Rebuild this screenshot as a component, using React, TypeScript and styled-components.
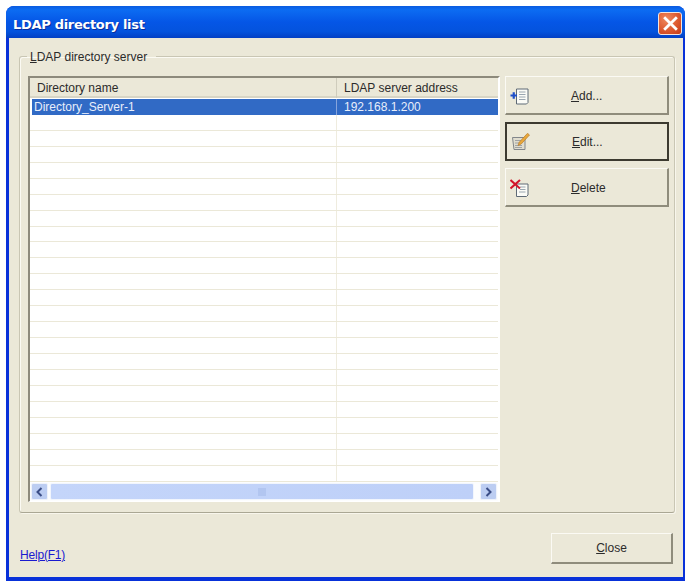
import styled, { createGlobalStyle } from "styled-components";

const rows = Array.from({ length: 24 }, (_, i) =>
  i === 0 ? { name: "Directory_Server-1", address: "192.168.1.200" } : { name: "", address: "" }
);

const GlobalStyle = createGlobalStyle`
  html, body {
    margin: 0;
    padding: 0;
    background: #fff;
  }
  body {
    font-family: "Liberation Sans", Arial, sans-serif;
    font-size: 12px;
    color: #2b2b2b;
  }
`;

const App = () => {
  return (
    <Page>
      <GlobalStyle />
      <Window>
        <TitleBar>
          <Title>LDAP directory list</Title>
          <CloseBox>
            <svg width="15" height="15" viewBox="0 0 14 14">
              <path d="M2 2 L12 12 M12 2 L2 12" stroke="#fff" strokeWidth="2.6" strokeLinecap="square" />
            </svg>
          </CloseBox>
        </TitleBar>
        <Body>
          <Group>
            <Legend>
              <u>L</u>DAP directory server
            </Legend>
            <GroupInner>
              <ListView>
                <Header>
                  <HeaderCell>Directory name</HeaderCell>
                  <HeaderCell>LDAP server address</HeaderCell>
                </Header>
                <Rows>
                  {rows.map((row, i) => (
                    <Row key={i} $selected={i === 0}>
                      <Cell>{row.name}</Cell>
                      <Cell>{row.address}</Cell>
                    </Row>
                  ))}
                </Rows>
                <ScrollBar>
                  <ArrowButton>
                    <svg width="9" height="10" viewBox="0 0 9 10">
                      <path d="M6.5 1 L2.5 5 L6.5 9" fill="none" stroke="#3a4d86" strokeWidth="2" />
                    </svg>
                  </ArrowButton>
                  <Thumb>
                    <svg width="9" height="8" viewBox="0 0 9 8">
                      <path d="M1 0V8M3 0V8M5 0V8M7 0V8" stroke="#a3b9e8" strokeWidth="1" />
                    </svg>
                  </Thumb>
                  <ArrowButton $end>
                    <svg width="9" height="10" viewBox="0 0 9 10">
                      <path d="M2.5 1 L6.5 5 L2.5 9" fill="none" stroke="#3a4d86" strokeWidth="2" />
                    </svg>
                  </ArrowButton>
                </ScrollBar>
              </ListView>
              <Actions>
                <ActionButton>
                  <IconSlot>
                    <svg width="20" height="18" viewBox="0 0 20 18">
                      <path d="M6.500 2h11.500v13.500l-1.500 1.500h-10z" fill="#fbfbf6" stroke="#5f6a76" />
                      <path d="M9 5h6.500M9 7.500h6.500M9 10h6.500M9 12.500h6.500" stroke="#9aa6b0" />
                      <path d="M0.500 8.500h6.500M3.750 5.250v6.500" stroke="#1f4fc8" strokeWidth="2.200" />
                    </svg>
                  </IconSlot>
                  <ButtonLabel>
                    <u>A</u>dd...
                  </ButtonLabel>
                </ActionButton>
                <ActionButton $focused>
                  <IconSlot>
                    <svg width="20" height="18" viewBox="0 0 20 18">
                      <path d="M1.500 4.500h12.500v12h-11z" fill="#e0ddcf" stroke="#82868a" />
                      <path d="M4 7.500h6M4 10h5M4 12.500h7M4 14.500h7" stroke="#a0a3a4" />
                      <path d="M7 12.500l1.200-3.200 8.300-9 2 1.700-8.300 9z" fill="#e8a83a" stroke="#b87b2c" strokeWidth="0.700" />
                    </svg>
                  </IconSlot>
                  <ButtonLabel>
                    <u>E</u>dit...
                  </ButtonLabel>
                </ActionButton>
                <ActionButton>
                  <IconSlot>
                    <svg width="20" height="18" viewBox="0 0 20 18">
                      <path d="M6.500 5h11.500v11l-1.500 1.500h-10z" fill="#fbfbf6" stroke="#5f6a76" />
                      <path d="M10 8h5.500M10 10.500h5.500M9 13h6.500" stroke="#9aa6b0" />
                      <path d="M0.500 1l9.500 8.500M10 1l-9.500 8.500" stroke="#d3152a" strokeWidth="2" />
                    </svg>
                  </IconSlot>
                  <ButtonLabel>
                    <u>D</u>elete
                  </ButtonLabel>
                </ActionButton>
              </Actions>
            </GroupInner>
          </Group>
          <Footer>
            <HelpLink href="#">Help(F1)</HelpLink>
            <CloseButton>
              <u>C</u>lose
            </CloseButton>
          </Footer>
        </Body>
      </Window>
    </Page>
  );
};
export default App;

const Page = styled.div`
  width: 689px;
  height: 582px;
  box-sizing: border-box;
  padding: 6px 4px 1px 6px;
  overflow: hidden;
`;

const Window = styled.div`
  height: 100%;
  display: flex;
  flex-direction: column;
  background: #0831d9;
  border-radius: 8px 8px 0 0;
  overflow: hidden;
`;

const TitleBar = styled.div`
  height: 32px;
  flex: none;
  box-sizing: border-box;
  display: flex;
  align-items: flex-start;
  justify-content: space-between;
  padding: 6px 3px 0 7px;
  background: linear-gradient(180deg, #0a5be0 0%, #0c6cf2 12%, #0556e6 50%, #0453dd 80%, #0340c4 100%);
`;

const Title = styled.div`
  font-family: "DejaVu Sans", sans-serif;
  font-size: 13px;
  font-weight: 700;
  letter-spacing: -0.3px;
  line-height: 26px;
  color: #fff;
  text-shadow: 1px 1px 0 #0a2f9c;
`;

const CloseBox = styled.div`
  width: 24px;
  height: 23px;
  box-sizing: border-box;
  display: flex;
  align-items: center;
  justify-content: center;
  border: 1px solid #f3e4dc;
  border-radius: 3px;
  background: radial-gradient(circle at 35% 30%, #ee8a60 0%, #dd5a30 55%, #c23a1a 100%);
`;

const Body = styled.div`
  flex: 1;
  min-height: 0;
  display: flex;
  flex-direction: column;
  margin: 0 2px 4px 3px;
  padding: 10px 8px 0 10px;
  background: #ebe8d8;
`;

const Group = styled.fieldset`
  height: 465px;
  flex: none;
  box-sizing: border-box;
  margin: 0;
  padding: 0 5px 9px 8px;
  border: 1px solid #c9c6b4;
  border-bottom-color: #aaa794;
  border-radius: 3px;
  box-shadow: inset 1px 1px 0 #fbfaf3, 1px 1px 0 #f8f6ec;
`;

const Legend = styled.legend`
  margin-left: -1px;
  padding: 2px 9px 0 3px;
  font-size: 12px;
  line-height: 14px;
`;

const GroupInner = styled.div`
  display: flex;
  gap: 5px;
  padding-top: 12px;
`;

const ListView = styled.div`
  width: 472px;
  height: 426px;
  flex: none;
  box-sizing: border-box;
  display: flex;
  flex-direction: column;
  background: #fff;
  border-top: 2px solid #8d8a7c;
  border-left: 2px solid #8d8a7c;
  border-right: 2px solid #fff;
  border-bottom: 1px solid #fff;
  overflow: hidden;
`;

const Header = styled.div`
  height: 20px;
  flex: none;
  box-sizing: border-box;
  display: grid;
  grid-template-columns: 307px 1fr;
  background: #ebe8d8;
  border-bottom: 2px solid #d8d5c5;
`;

const HeaderCell = styled.div`
  padding-left: 7px;
  line-height: 20px;
  border-right: 1px solid #cfccbc;
  &:last-child {
    border-right: none;
  }
`;

const Rows = styled.div`
  flex: 1;
  min-height: 0;
  overflow: hidden;
  padding-top: 1px;
`;

const Row = styled.div<{ $selected?: boolean }>`
  height: 14.95px;
  display: grid;
  grid-template-columns: ${(p) => (p.$selected ? "305px" : "307px")} 1fr;
  margin-left: ${(p) => (p.$selected ? "2px" : "0")};
  border-bottom: 1px solid ${(p) => (p.$selected ? "#316ac5" : "#ebe8d8")};
  background: ${(p) => (p.$selected ? "#316ac5" : "#fff")};
  color: ${(p) => (p.$selected ? "#e8eefb" : "inherit")};
  & > div:first-child {
    border-right-color: ${(p) => (p.$selected ? "#86a4dc" : "#efecdf")};
  }
`;

const Cell = styled.div`
  padding-left: 2px;
  line-height: 16px;
  border-right: 1px solid #efecdf;
  &:last-child {
    padding-left: 7px;
    border-right: none;
  }
`;

const ScrollBar = styled.div`
  height: 19px;
  flex: none;
  box-sizing: border-box;
  display: flex;
  align-items: center;
  gap: 2px;
  padding: 0 1px;
  background: #fcfdfe;
`;

const ArrowButton = styled.div<{ $end?: boolean }>`
  width: 17px;
  height: 17px;
  flex: none;
  box-sizing: border-box;
  display: flex;
  align-items: center;
  justify-content: center;
  margin-left: ${(p) => (p.$end ? "4px" : "0")};
  border: 1px solid #eef2fb;
  border-radius: 2px;
  background: #bccdf2;
`;

const Thumb = styled.div`
  flex: 1;
  height: 17px;
  box-sizing: border-box;
  display: flex;
  align-items: center;
  justify-content: center;
  border: 1px solid #f1f5fd;
  border-radius: 2px;
  background: linear-gradient(90deg, #c4d5fa, #bed0f8);
`;

const Actions = styled.div`
  width: 164px;
  flex: none;
  display: flex;
  flex-direction: column;
  gap: 7px;
`;

const ActionButton = styled.div<{ $focused?: boolean }>`
  height: 39px;
  box-sizing: border-box;
  display: flex;
  align-items: center;
  padding-top: 1px;
  background: #ebe8d8;
  border: ${(p) => (p.$focused ? "2px solid #3c3a30" : "1px solid")};
  border-color: ${(p) => (p.$focused ? "#3c3a30" : "#fbfaf4 #8f8c7c #8f8c7c #fbfaf4")};
  border-bottom-width: 2px;
  border-right-width: 2px;
`;

const IconSlot = styled.span`
  width: 20px;
  height: 18px;
  margin-left: 4px;
  display: flex;
`;

const ButtonLabel = styled.span`
  margin-left: 41px;
`;

const Footer = styled.div`
  flex: 1;
  display: flex;
  align-items: flex-end;
  justify-content: space-between;
  padding: 0 2px 13px 1px;
`;

const HelpLink = styled.a`
  color: #1a1ad0;
  font-size: 12px;
  line-height: 14px;
  letter-spacing: -0.2px;
  margin-bottom: 2px;
  text-decoration: underline;
`;

const CloseButton = styled.div`
  width: 122px;
  height: 31px;
  box-sizing: border-box;
  display: flex;
  align-items: center;
  justify-content: center;
  background: #ebe8d8;
  border: 1px solid;
  border-color: #fbfaf4 #8f8c7c #8f8c7c #fbfaf4;
  border-bottom-width: 2px;
  border-right-width: 2px;
`;
